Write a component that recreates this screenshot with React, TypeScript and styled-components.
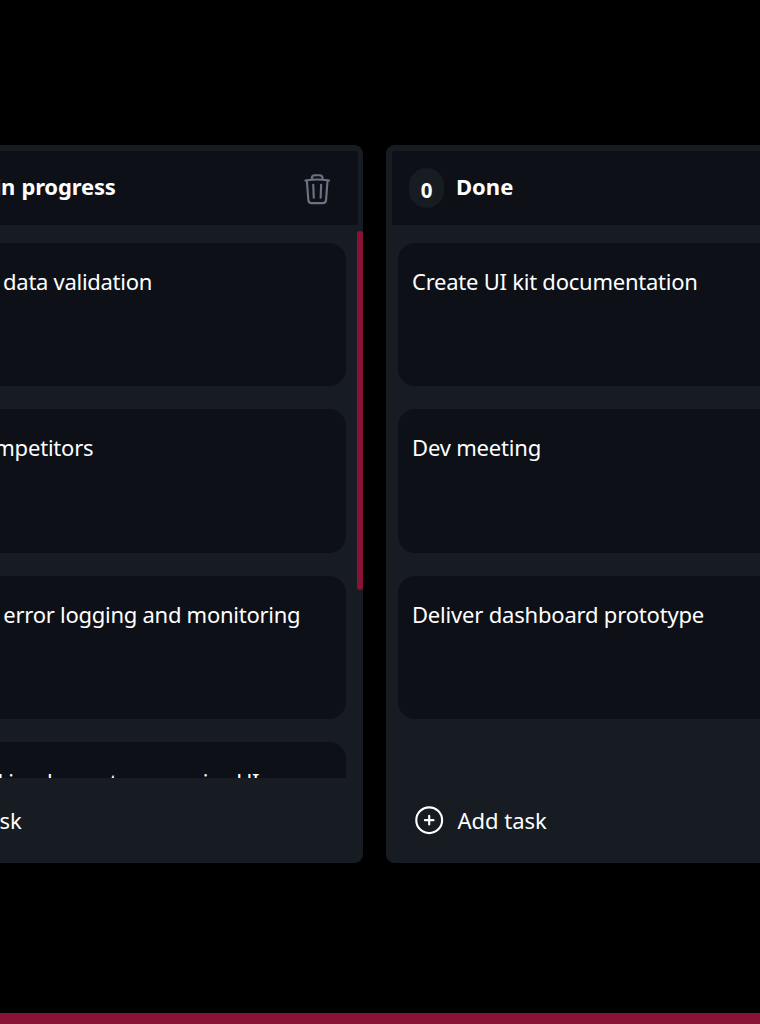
import React from "react";
import styled, { createGlobalStyle } from "styled-components";

const color = {
  page: "#000000",
  column: "#161c22",
  surface: "#0d1117",
  accent: "#881337",
  muted: "#6b7280",
};

const GlobalStyle = createGlobalStyle`
  *, *::before, *::after { box-sizing: border-box; }
  body {
    margin: 0;
    overflow: hidden;
    background: ${color.page};
    color: #fff;
    font: 22px/34px "Noto Sans", "Open Sans", sans-serif;
  }
`;

const Page = styled.div`
  height: 1024px;
  display: flex;
  flex-direction: column;
  overflow: hidden;
`;

const Board = styled.main`
  flex: 1;
  min-height: 0;
  display: flex;
  gap: 23px;
  margin-left: -139px;
  padding-top: 145px;
`;

const PageScrollbar = styled.div`
  height: 11px;
  background: ${color.accent};
`;

const ColumnBox = styled.section`
  flex: none;
  width: 502px;
  height: 717.5px;
  display: flex;
  flex-direction: column;
  overflow: hidden;
  border-radius: 8.6px;
  background: ${color.column};
`;

const ColumnHeader = styled.header`
  flex: none;
  height: 86px;
  display: flex;
  align-items: center;
  justify-content: space-between;
  border: 6px solid ${color.column};
  border-right-width: 5px;
  border-radius: 8.6px 8.6px 0 0;
  background: ${color.surface};
  padding: 0 24px 0 17px;
`;

const Heading = styled.div`
  display: flex;
  gap: 12px;
`;

const Count = styled.span`
  width: 35px;
  height: 40px;
  display: flex;
  align-items: center;
  justify-content: center;
  padding-top: 3px;
  border-radius: 18px;
  background: ${color.column};
  font-size: 20.5px;
  font-weight: 700;
`;

const Title = styled.h2<{ $spacing: number }>`
  margin: 0;
  padding-top: 1px;
  font-size: 22px;
  font-weight: 700;
  white-space: nowrap;
  letter-spacing: ${(p) => p.$spacing}px;
  word-spacing: 0.6px;
`;

const IconButton = styled.button`
  display: flex;
  margin: 0;
  padding: 2px 0 0;
  border: 0;
  background: none;
  color: ${color.muted};
`;

const Body = styled.div`
  flex: 1;
  min-height: 0;
  display: flex;
`;

const TaskList = styled.div`
  flex: 1;
  min-width: 0;
  display: flex;
  flex-direction: column;
  gap: 23px;
  padding: 11.5px;
  overflow: hidden;
`;

const Card = styled.article`
  flex: none;
  height: 143.5px;
  padding: 21px 14.5px;
  border-radius: 17.2px;
  background: ${color.surface};
`;

const TaskText = styled.p<{ $spacing: number; $indent?: number; $drop?: number }>`
  margin: 0;
  padding-top: ${(p) => p.$drop ?? 0}px;
  text-indent: ${(p) => p.$indent ?? 0}px;
  white-space: nowrap;
  letter-spacing: ${(p) => p.$spacing}px;
`;

const ScrollThumb = styled.div`
  flex: none;
  width: 5.7px;
  height: 359px;
  border-radius: 3px;
  background: ${color.accent};
`;

const AddTask = styled.button`
  flex: none;
  height: 84.5px;
  display: flex;
  align-items: center;
  gap: 11.5px;
  margin: 0;
  padding: 0 25.5px;
  border: 0;
  background: none;
  color: inherit;
  font: inherit;
`;

const Icon = styled.svg`
  flex: none;
  width: 34.4px;
  height: 34.4px;
  fill: none;
  stroke: currentColor;
  stroke-width: 1.5;
  stroke-linecap: round;
  stroke-linejoin: round;
`;

const TrashIcon = () => (
  <Icon viewBox="0 0 24 24">
    <path d="M14.74 9l-.346 9m-4.788 0L9.26 9m9.968-3.21c.342.052.682.107 1.022.166m-1.022-.165L18.16 19.673a2.25 2.25 0 01-2.244 2.077H8.084a2.25 2.25 0 01-2.244-2.077L4.772 5.79m14.456 0a48.108 48.108 0 00-3.478-.397m-12 .562c.34-.059.68-.114 1.022-.165m0 0a48.11 48.11 0 013.478-.397m7.5 0v-.916c0-1.18-.91-2.164-2.09-2.201a51.964 51.964 0 00-3.32 0c-1.18.037-2.09 1.022-2.09 2.201v.916m7.5 0a48.667 48.667 0 00-7.5 0" />
  </Icon>
);

const PlusCircleIcon = () => (
  <Icon viewBox="0 0 24 24">
    <path d="M12 9v6m3-3H9m12 0a9 9 0 11-18 0 9 9 0 0118 0z" />
  </Icon>
);

type Task = { text: string; spacing: number; indent?: number; drop?: number };
type ColumnData = { title: string; spacing: number; tasks: Task[]; scrolls?: boolean };

const columns: ColumnData[] = [
  {
    title: "Work in progress",
    spacing: -0.15,
    scrolls: true,
    tasks: [
      { text: "Implement data validation", spacing: -0.28, indent: -1 },
      { text: "Analyze competitors", spacing: -0.2 },
      { text: "Implement error logging and monitoring", spacing: -0.26, indent: -1 },
      { text: "Design and implement responsive UI", spacing: -0.36, indent: 2.5, drop: 1 },
    ],
  },
  {
    title: "Done",
    spacing: 0,
    tasks: [
      { text: "Create UI kit documentation", spacing: -0.24 },
      { text: "Dev meeting", spacing: -0.18 },
      { text: "Deliver dashboard prototype", spacing: -0.19 },
    ],
  },
];

const Column = ({ title, spacing, tasks, scrolls }: ColumnData) => (
  <ColumnBox>
    <ColumnHeader>
      <Heading>
        <Count>0</Count>
        <Title $spacing={spacing}>{title}</Title>
      </Heading>
      <IconButton aria-label="Delete column">
        <TrashIcon />
      </IconButton>
    </ColumnHeader>
    <Body>
      <TaskList>
        {tasks.map((task) => (
          <Card key={task.text}>
            <TaskText $spacing={task.spacing} $indent={task.indent} $drop={task.drop}>
              {task.text}
            </TaskText>
          </Card>
        ))}
      </TaskList>
      {scrolls && <ScrollThumb />}
    </Body>
    <AddTask>
      <PlusCircleIcon />
      Add task
    </AddTask>
  </ColumnBox>
);

export default function App() {
  return (
    <>
      <GlobalStyle />
      <Page>
        <Board>
          {columns.map((column) => (
            <Column key={column.title} {...column} />
          ))}
        </Board>
        <PageScrollbar />
      </Page>
    </>
  );
}
